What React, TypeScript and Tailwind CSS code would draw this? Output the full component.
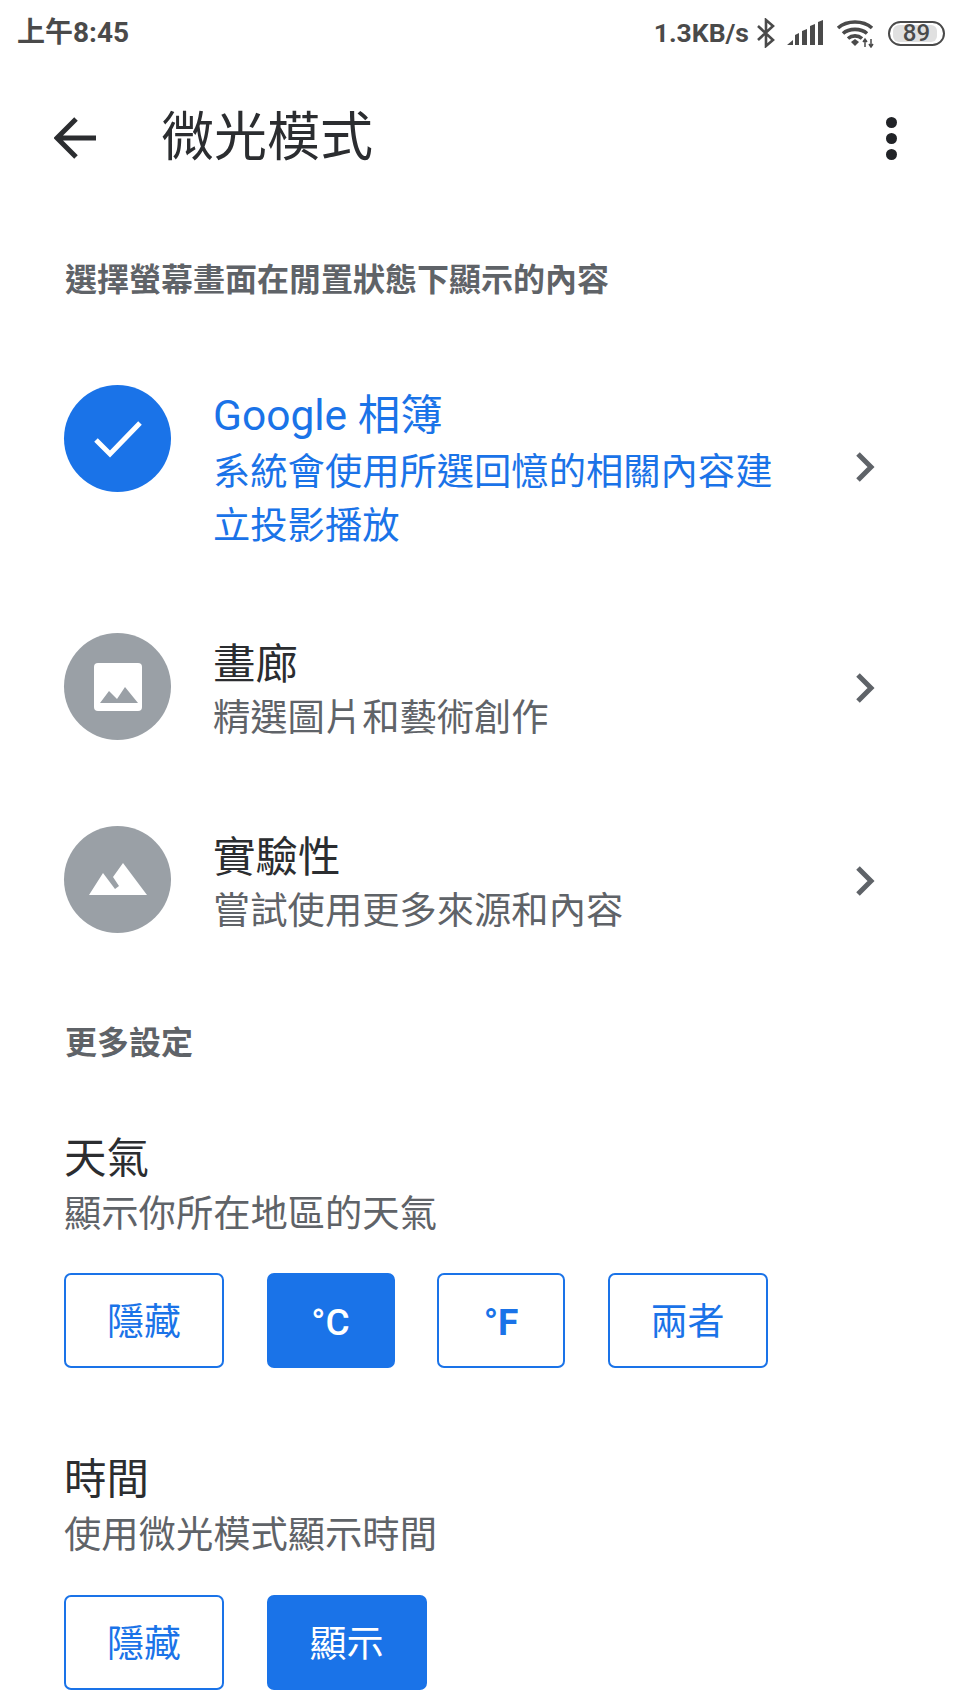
const font = "font-['Roboto','Noto_Sans_CJK_TC',sans-serif]";

function StatusBar() {
  return (
    <div className="flex h-[64px] items-center justify-between pl-[17px] pr-[15px] pt-[2px] text-[#4a4a4a]">
      <span className="text-[28px] font-bold leading-none">上午8:45</span>
      <div className="flex items-center">
        <span className="text-[26.500px] font-bold leading-none">1.3KB/s</span>
        <svg width="20" height="30" viewBox="0 0 20 30" className="ml-[7px]" fill="none" stroke="#4a4a4a" strokeWidth="2.600">
          <path d="M2 8l15 14-7 6V2l7 6L2 22" />
        </svg>
        <svg width="36" height="26" viewBox="0 0 36 26" className="ml-[11px]" fill="#4a4a4a">
          <path d="M0 25l6-5v5zM8 15l4-2v12H8zM15 11l5-2v16h-5zM23 6l5-2v21h-5zM31 2l5-2v25h-5z" />
        </svg>
        <svg width="40" height="30" viewBox="0 0 40 30" className="ml-[13px]" fill="none">
          <path d="M2 10C11 2 27 2 36 10M7 15.500C13 10 25 10 31 15.500M12 20.500C16 17 22 17 26 20.500" stroke="#4a4a4a" strokeWidth="3.600" />
          <path d="M15 24l4-3 4 3-4 4z" fill="#4a4a4a" />
          <path d="M29 21v8M35 21v8M27 24l2-3 2 3M33 26l2 3 2-3" stroke="#4a4a4a" strokeWidth="1.500" />
        </svg>
        <div className="relative ml-[12px] flex h-[25px] w-[57px] items-center justify-center rounded-full border-[2.500px] border-[#4a4a4a]">
          <div className="absolute bottom-[2px] left-[3px] top-[2px] w-[44px] rounded-[6px] bg-[#e0e0e0]" />
          <span className="relative text-[24px] font-medium leading-none">89</span>
        </div>
      </div>
    </div>
  );
}

function Header() {
  return (
    <div className="flex h-[148px] items-center pl-[54px] pr-[63px]">
      <svg width="42" height="42" viewBox="0 0 42 42" fill="none" stroke="#2b2d30" strokeWidth="5">
        <path d="M42 21H3M22 2L3 21l19 19" />
      </svg>
      <h1 className="ml-[65px] flex-1 text-[53px] font-normal leading-none text-[#2b2d30]">微光模式</h1>
      <div className="flex flex-col gap-[5px]">
        <span className="h-[11px] w-[11px] rounded-full bg-[#212327]" />
        <span className="h-[11px] w-[11px] rounded-full bg-[#212327]" />
        <span className="h-[11px] w-[11px] rounded-full bg-[#212327]" />
      </div>
    </div>
  );
}

function SectionLabel({ children, className }: { children: string; className: string }) {
  return <h2 className={`text-[32px] font-bold leading-[44px] text-[#5f6368] ${className}`}>{children}</h2>;
}

function Chevron() {
  return (
    <svg width="20" height="32" viewBox="0 0 20 32" fill="none" stroke="#5f6368" strokeWidth="5" className="-mt-[4px] ml-auto shrink-0">
      <path d="M3 3l13 13L3 29" />
    </svg>
  );
}

function Row({
  icon,
  title,
  sub,
  active,
  className,
}: {
  icon: React.ReactNode;
  title: string;
  sub: string;
  active?: boolean;
  className: string;
}) {
  return (
    <div className={`flex items-center pl-[64px] pr-[85px] ${className}`}>
      <div
        className={`flex h-[107px] w-[107px] shrink-0 items-center justify-center self-start rounded-full ${
          active ? "bg-[#1a73e8]" : "bg-[#9aa0a6]"
        }`}
      >
        {icon}
      </div>
      <div className={`ml-[42px] w-[570px] ${active ? "mt-[4px]" : "mt-[5px] mb-[1px]"}`}>
        <div className={`text-[42.500px] leading-[54px] ${active ? "text-[#1a73e8]" : "text-[#2b2d30]"}`}>{title}</div>
        <div className={`text-[37.300px] leading-[54px] ${active ? "pt-[2px] text-[#1a73e8]" : "-mt-[1px] pb-[1px] text-[#5f6368]"}`}>{sub}</div>
      </div>
      <Chevron />
    </div>
  );
}

function Option({ label, on, width, weight }: { label: string; on?: boolean; width: string; weight?: string }) {
  return (
    <div
      className={`flex h-[95px] items-center justify-center rounded-[7px] border-[2px] border-[#1a73e8] pt-[3px] text-[37px] leading-none ${width} ${weight ?? ""} ${
        on ? "bg-[#1a73e8] text-white" : "bg-white text-[#1a73e8]"
      }`}
    >
      {label}
    </div>
  );
}

function Setting({ title, sub }: { title: string; sub: string }) {
  return (
    <div>
      <div className="text-[42.500px] leading-[54px] text-[#2b2d30]">{title}</div>
      <div className="pb-[1px] pt-[1px] text-[37.300px] leading-[54px] text-[#5f6368]">{sub}</div>
    </div>
  );
}

export default function App() {
  return (
    <div className={`h-[1706px] w-[960px] overflow-hidden bg-white ${font}`}>
      <StatusBar />
      <Header />
      <SectionLabel className="ml-[65px] mt-[46px]">選擇螢幕畫面在閒置狀態下顯示的內容</SectionLabel>

      <Row
        className="mt-[83px]"
        active
        title="Google 相簿"
        sub="系統會使用所選回憶的相關內容建立投影播放"
        icon={
          <svg width="48" height="38" viewBox="0 0 48 38" fill="none" stroke="#fff" strokeWidth="5">
            <path d="M2 20l14 14L46 3" />
          </svg>
        }
      />
      <Row
        className="mt-[80px]"
        title="畫廊"
        sub="精選圖片和藝術創作"
        icon={
          <svg width="48" height="48" viewBox="0 0 48 48">
            <rect width="48" height="48" rx="4" fill="#fff" />
            <path d="M6 40l9-12 8 8 8-12 13 16z" fill="#9aa0a6" />
          </svg>
        }
      />
      <Row
        className="mt-[79px]"
        title="實驗性"
        sub="嘗試使用更多來源和內容"
        icon={
          <svg width="60" height="34" viewBox="0 0 60 34" fill="#fff">
            <path d="M1 32l14-22 12 16 4-3-6-9L35 0l24 32z" />
          </svg>
        }
      />

      <SectionLabel className="ml-[65px] mt-[81px]">更多設定</SectionLabel>

      <div className="ml-[64px] mt-[67px]">
        <Setting title="天氣" sub="顯示你所在地區的天氣" />
        <div className="mt-[31px] flex gap-[42.500px]">
          <Option label="隱藏" width="w-[160px]" />
          <Option label="°C" on width="w-[128px]" weight="font-medium" />
          <Option label="°F" width="w-[128px]" weight="font-bold" />
          <Option label="兩者" width="w-[160px]" />
        </div>
      </div>

      <div className="ml-[64px] mt-[85px]">
        <Setting title="時間" sub="使用微光模式顯示時間" />
        <div className="mt-[32px] flex gap-[42.500px]">
          <Option label="隱藏" width="w-[160px]" />
          <Option label="顯示" on width="w-[160px]" />
        </div>
      </div>
    </div>
  );
}
